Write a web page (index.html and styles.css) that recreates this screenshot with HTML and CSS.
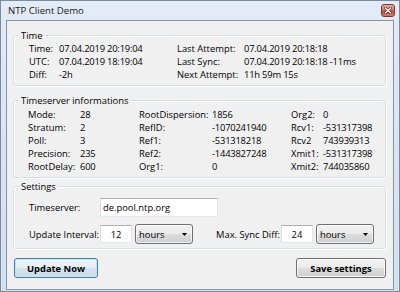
FILE: index.html
```html
<!DOCTYPE html>
<html>
<head>
<meta charset="utf-8">
<title>NTP Client Demo</title>
<link rel="stylesheet" href="styles.css">
</head>
<body>
<div class="window">
  <div class="titlebar">
    <span class="title">NTP Client Demo</span>
    <div class="close">
      <svg width="8" height="7" viewBox="0 0 8 7"><path d="M1.2 1 L6.8 6 M6.8 1 L1.2 6" stroke="#5a1e14" stroke-width="2.6" stroke-linecap="round"/><path d="M1.2 1 L6.8 6 M6.8 1 L1.2 6" stroke="#ffffff" stroke-width="1.4" stroke-linecap="round"/></svg>
    </div>
  </div>
  <div class="client">
    <fieldset class="group group-time">
      <legend>Time</legend>
      <div class="grid time-grid">
        <span>Time:</span><span class="val">07.04.2019 20:19:04</span><span>Last Attempt:</span><span class="val">07.04.2019 20:18:18</span>
        <span>UTC:</span><span class="val">07.04.2019 18:19:04</span><span>Last Sync:</span><span class="val">07.04.2019 20:18:18 -11ms</span>
        <span>Diff:</span><span class="val">-2h</span><span>Next Attempt:</span><span class="val">11h 59m 15s</span>
      </div>
    </fieldset>

    <fieldset class="group group-server">
      <legend>Timeserver informations</legend>
      <div class="grid server-grid">
        <span>Mode:</span><span class="val">28</span><span>RootDispersion:</span><span class="val">1856</span><span>Org2:</span><span class="val">0</span>
        <span>Stratum:</span><span class="val">2</span><span>RefID:</span><span class="val">-1070241940</span><span>Rcv1:</span><span class="val">-531317398</span>
        <span>Poll:</span><span class="val">3</span><span>Ref1:</span><span class="val">-531318218</span><span>Rcv2</span><span class="val">743939313</span>
        <span>Precision:</span><span class="val">235</span><span>Ref2:</span><span class="val">-1443827248</span><span>Xmit1:</span><span class="val">-531317398</span>
        <span>RootDelay:</span><span class="val">600</span><span>Org1:</span><span class="val">0</span><span>Xmit2:</span><span class="val">744035860</span>
      </div>
    </fieldset>

    <fieldset class="group group-settings">
      <legend>Settings</legend>
      <div class="form-row">
        <span class="form-label">Timeserver:</span>
        <input class="textbox server-box" type="text" value="de.pool.ntp.org">
      </div>
      <div class="form-row row-interval">
        <span class="form-label">Update Interval:</span>
        <input class="textbox num-box" type="text" value="12">
        <div class="combo"><span>hours</span><svg width="5" height="3" viewBox="0 0 5 3"><path d="M0 0 H5 L2.5 3 Z" fill="#000"/></svg></div>
        <span class="form-label label-max">Max. Sync Diff:</span>
        <input class="textbox num-box num-max" type="text" value="24">
        <div class="combo"><span>hours</span><svg width="5" height="3" viewBox="0 0 5 3"><path d="M0 0 H5 L2.5 3 Z" fill="#000"/></svg></div>
      </div>
    </fieldset>

    <div class="button-row">
      <button class="btn btn-default" type="button">Update Now</button>
      <button class="btn btn-save" type="button">Save settings</button>
    </div>
  </div>
</div>
</body>
</html>
```

FILE: styles.css
```css
* {
  box-sizing: border-box;
}

html, body {
  margin: 0;
  padding: 0;
}

body {
  width: 400px;
  height: 292px;
  overflow: hidden;
  font-family: "Open Sans", "Noto Sans", sans-serif;
  font-size: 9.4px;
  line-height: 13px;
  color: #000;
}

.window {
  width: 400px;
  height: 292px;
  border: 1px solid #7b8a9c;
  background: linear-gradient(#e2ebf6, #d2e0f0);
  padding: 0 5px 1px;
  display: flex;
  flex-direction: column;
}

.titlebar {
  height: 19px;
  margin: 0 -5px;
  padding: 0 4px 0 6px;
  display: flex;
  align-items: center;
}

.title {
  padding-left: 1px;
  font-size: 9.6px;
  color: #1a1a1a;
}

.close {
  margin-left: auto;
  width: 14px;
  height: 13px;
  border: 1px solid #7e3a2f;
  border-radius: 3px;
  background: linear-gradient(#e8ab9c 0%, #d57c67 45%, #c24f35 55%, #d27a5e 100%);
  display: flex;
  align-items: center;
  justify-content: center;
}

.client {
  flex: 1;
  border: 1px solid #8593a4;
  background: #f0f0f0;
  padding: 8px 7px 0 6px;
  display: flex;
  flex-direction: column;
}

.group {
  margin: 0;
  min-width: 0;
  border: 1px solid #d5dfe5;
  border-radius: 3px;
  box-shadow: inset 1px 1px 0 #fff, 1px 1px 0 #fff;
  padding: 0 6px 4px 5px;
}

.group legend {
  padding: 0 2px;
  line-height: 13px;
  background: #f0f0f0;
}

.group-server {
  margin-top: 8px;
}

.group-server .grid {
  padding-top: 1px;
}

.group-settings {
  margin-top: 2px;
  padding-top: 5px;
}

.grid {
  display: grid;
  white-space: nowrap;
}

.time-grid {
  padding-left: 10px;
  grid-template-columns: 30px 118px 67px 1fr;
}

.server-grid {
  padding-left: 9px;
  grid-template-columns: 52px 59px 73px 79px 32px 1fr;
}

.val {
  letter-spacing: -0.2px;
}

.form-row {
  display: flex;
  align-items: center;
  padding-left: 10px;
  white-space: nowrap;
}

.row-interval {
  margin-top: 7px;
  height: 20px;
}

.form-label {
  width: 71px;
  flex: none;
}

.label-max {
  margin-left: 23px;
  width: auto;
}

.textbox {
  font: inherit;
  color: #000;
  margin: 0;
  background: #fff;
  border: 1px solid;
  border-color: #abadb3 #e2e3ea #e3e9ef #dbdfe6;
  padding: 0 2px;
  outline: none;
}

.server-box {
  width: 118px;
  height: 19px;
}

.num-box {
  width: 32px;
  height: 18px;
  text-align: center;
}

.num-max {
  margin-left: 1px;
}

.combo {
  width: 58px;
  height: 20px;
  margin-left: 3px;
  border: 1px solid #707070;
  border-radius: 3px;
  background: linear-gradient(#f2f2f2 0%, #ebebeb 50%, #dddddd 50%, #cfcfcf 100%);
  box-shadow: inset 0 0 0 1px rgba(255, 255, 255, 0.7);
  display: flex;
  align-items: center;
  justify-content: space-between;
  padding: 0 5px 0 3px;
}

.button-row {
  margin-top: 9px;
  display: flex;
  justify-content: space-between;
}

.btn {
  font: inherit;
  font-weight: 700;
  color: #000;
  height: 20px;
  padding: 0;
  border-radius: 3px;
  border: 1px solid #707070;
  background: linear-gradient(#f2f2f2 0%, #ebebeb 50%, #dddddd 50%, #cfcfcf 100%);
  box-shadow: inset 0 0 0 1px rgba(255, 255, 255, 0.8);
}

.btn-default {
  width: 84px;
  margin-left: 1px;
  border-color: #3c7fb1;
  background: linear-gradient(#eef4f8 0%, #e4edf3 50%, #d6e3ed 50%, #cbdbe7 100%);
  box-shadow: inset 0 0 0 1px #c6e4f8;
}

.btn-save {
  width: 90px;
}
```
